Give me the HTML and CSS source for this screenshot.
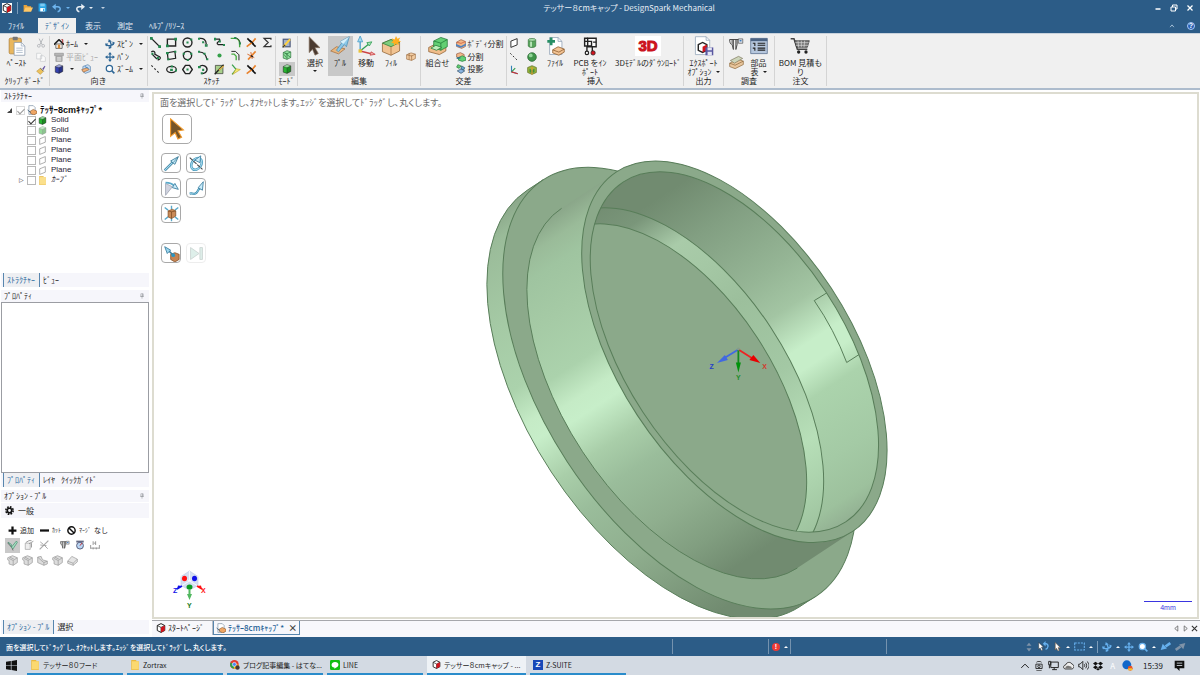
FILE: index.html
```html
<!DOCTYPE html>
<html lang="ja">
<head>
<meta charset="utf-8">
<title>テッサー８cmキャップ - DesignSpark Mechanical</title>
<link rel="stylesheet" href="styles.css">
</head>
<body>
<svg class="defs" aria-hidden="true">
  <defs>
    <symbol id="cube" viewBox="0 0 16 16"><path d="M2 4 8 1l6 2v9l-6 3-6-2z" fill="currentColor" stroke="#222" stroke-width=".8"/><path d="M2 4l6 2 6-3-6-2z" fill="#fff" opacity=".5"/><path d="M8 6v9l6-3V3z" fill="#000" opacity=".22"/><path d="M2 4l6 2 6-3M8 6v9" fill="none" stroke="#222" stroke-width=".6"/></symbol>
    <symbol id="app" viewBox="0 0 16 16"><path d="M2 4 8 1l6 3v8l-6 3-6-3z" fill="#fff" stroke="#222" stroke-width="1.600"/><path d="M2 4l6 3 6-3M8 7v8" fill="none" stroke="#222" stroke-width="1.200"/><path d="M8 7l6-3v8l-6 3z" fill="#d3131d"/></symbol>
    <symbol id="folder" viewBox="0 0 16 16"><path d="M1 14V3h5l1.500 2H13v2.500" fill="#e8a33c"/><path d="M1 14l3-7h12l-3 7z" fill="#ffc766"/></symbol>
    <symbol id="yfolder" viewBox="0 0 16 16"><path d="M2 0h8v2h4v14H2z" fill="#e9b93f"/><path d="M3 2h11v13H3z" fill="#fbd970"/></symbol>
    <symbol id="save" viewBox="0 0 16 16"><path d="M1 1h12l2 2v12H1z" fill="#27a4e6"/><path d="M4 1h8v5H4z" fill="#7cc9f2"/><path d="M4 9h8v6H4z" fill="#fff"/><path d="M9 10h2v4H9z" fill="#27a4e6"/></symbol>
    <symbol id="undo" viewBox="0 0 16 16"><path d="M3 6h6c6 0 5 7 0 8" fill="none" stroke="currentColor" stroke-width="2.400"/><path d="M6 1v10L0 6z" fill="currentColor"/></symbol>
    <symbol id="pin" viewBox="0 0 16 16"><path d="M5 2h6v7H5zM3 9h10M8 9v6M9.500 2v7" fill="none" stroke="#8a8d94" stroke-width="1.400"/></symbol>
    <symbol id="clip" viewBox="0 0 24 28"><rect x="1" y="3" width="17" height="22" rx="2" fill="#e9b75e" stroke="#a97931"/><rect x="6" y="1" width="7" height="5" rx="1" fill="#777"/><path d="M8 9h10l5 5v13H8z" fill="#fff" stroke="#8494a8"/><path d="M18 9v5h5M11 17h9M11 20h9M11 23h9" fill="none" stroke="#9aabc0"/></symbol>
    <symbol id="cut" viewBox="0 0 16 16"><path d="M5 1l5 10M11 1 6 11" stroke="#b5b8bc" stroke-width="1.600"/><circle cx="4.500" cy="12.500" r="2.200" fill="none" stroke="#b5b8bc" stroke-width="1.500"/><circle cx="11.500" cy="12.500" r="2.200" fill="none" stroke="#b5b8bc" stroke-width="1.500"/></symbol>
    <symbol id="copy" viewBox="0 0 16 16"><path d="M1 2h6l2 2v7H1zM7 6h5l3 3v6H7z" fill="#fafafa" stroke="#c4c7ca"/></symbol>
    <symbol id="brush" viewBox="0 0 16 16"><path d="M10 6l4-5 1 1-3 6z" fill="#604fa0"/><path d="M1 10l6-5 5 5-5 5z" fill="#edc35c" stroke="#a9802c" stroke-width=".7"/><path d="M7 5l5 5" stroke="#666" stroke-width="1.500"/></symbol>
    <symbol id="home" viewBox="0 0 16 16"><path d="M3 8h10v7H3z" fill="#fff" stroke="#222"/><path d="M0 9l8-8 8 8" fill="none" stroke="#222" stroke-width="2.400"/><path d="M6 9h4v6H6z" fill="#d98a34"/><path d="M12 1h2v5" stroke="#a22" fill="none" stroke-width="1.500"/></symbol>
    <symbol id="plan" viewBox="0 0 16 16"><path d="M1 2h14v4H1zM3 7h10v8H3z" fill="#b5b5b5" stroke="#8e8e8e"/><path d="M5 9h6M5 11h6M5 13h6" stroke="#eee"/></symbol>
    <symbol id="viewset" viewBox="0 0 16 16"><path d="M3 4l8-3 4 3v8l-8 3-4-3z" fill="#c8dcf0" stroke="#4a78a8"/><path d="M1 9l9-3 3 3-9 4z" fill="#f1b17b" stroke="#7a4a20" stroke-width=".8"/><path d="M6 4l6 3" stroke="#3a80c0" stroke-width="1.500"/></symbol>
    <symbol id="move4" viewBox="0 0 16 16"><path d="M8 2v12M2 8h12" stroke="currentColor" stroke-width="2"/><path d="M8 0l3 4H5zM8 16l3-4H5zM0 8l4-3v6zM16 8l-4-3v6z" fill="currentColor"/></symbol>
    <symbol id="spin" viewBox="0 0 16 16"><path d="M1 9c3 2 8 2 13-1M8 14c3-3 2-8-1-11" fill="none" stroke="currentColor" stroke-width="2.200"/><path d="M5 5l1-5 5 4zM16 6l-4-2v7zM0 7l5 0-3 5zM6 11l0 5 5-2z" fill="currentColor"/></symbol>
    <symbol id="mag" viewBox="0 0 16 16"><circle cx="7" cy="7" r="5" fill="#fff" stroke="currentColor" stroke-width="2"/><path d="M11 11l4 4" stroke="currentColor" stroke-width="2.500"/></symbol>
    <symbol id="s1" viewBox="0 0 16 16"><path d="M2 2l12 12" stroke="#222" stroke-width="2"/><path d="M0 0h4v4H0zM12 12h4v4h-4z" fill="#258b50"/></symbol>
    <symbol id="s2" viewBox="0 0 16 16"><path d="M2 3h12v10H2z" fill="none" stroke="#222" stroke-width="2"/><path d="M0 11h4v4H0zM12 1h4v4h-4z" fill="#258b50"/></symbol>
    <symbol id="s3" viewBox="0 0 16 16"><circle cx="8" cy="8" r="6.500" fill="none" stroke="#222" stroke-width="2"/><path d="M6.500 6.500h3v3h-3zM12 2h3v3h-3z" fill="#258b50"/></symbol>
    <symbol id="s4" viewBox="0 0 16 16"><path d="M2 2c6-1 10 3 10 8" fill="none" stroke="#222" stroke-width="1.800"/><path d="M0 1h3v3H0zM10 10h4v4h-4zM6 6h3v3H6z" fill="#258b50"/><path d="M9 8l5 5" stroke="#888"/></symbol>
    <symbol id="s5" viewBox="0 0 16 16"><path d="M2 3h6c3 4-7 4-2 8h8" fill="none" stroke="#222" stroke-width="1.800"/><path d="M0 1h3v4H0zM13 10h3v3h-3zM7 5h3v3H7z" fill="#258b50"/></symbol>
    <symbol id="s6" viewBox="0 0 16 16"><path d="M1 2h6c5 0 7 4 7 8v5" fill="none" stroke="#49a83e" stroke-width="2"/><path d="M7 1c4 0 7 3 8 8" fill="none" stroke="#222"/><path d="M6 0h3v3H6zM13 8h3v3h-3z" fill="#258b50"/></symbol>
    <symbol id="s7" viewBox="0 0 16 16"><path d="M2 2l12 12" stroke="#111" stroke-width="2.200"/><path d="M14 2L9 8 1 14" fill="none" stroke="#e9822c" stroke-width="2.400"/><path d="M6 5l5 5" stroke="#111" stroke-width="2"/></symbol>
    <symbol id="s8" viewBox="0 0 16 16"><path d="M13 4V2H3l6 6-6 6h10v-2" fill="none" stroke="#333" stroke-width="1.800"/></symbol>
    <symbol id="s9" viewBox="0 0 16 16"><path d="M2 3c3-3 6 0 5 3l5 3c5 1 3 6-1 5M3 6l7 7" fill="none" stroke="#222" stroke-width="1.800"/><path d="M2 4h3v3H2zM10 10h3v3h-3z" fill="#258b50"/></symbol>
    <symbol id="s10" viewBox="0 0 16 16"><path d="M2 4l11-2 1 10-11 2z" fill="none" stroke="#222" stroke-width="1.800"/><path d="M0 3h4v3H0zM12 1h3v3h-3zM2 12h3v3H2z" fill="#258b50"/></symbol>
    <symbol id="s11" viewBox="0 0 16 16"><circle cx="8" cy="8" r="6" fill="none" stroke="#222" stroke-width="2"/><path d="M1 4h3v3H1zM12 4h3v3h-3zM7 13h3v3H7z" fill="#258b50"/></symbol>
    <symbol id="s12" viewBox="0 0 16 16"><path d="M2 3c6 0 10 5 11 11" fill="none" stroke="#222" stroke-width="1.600"/><path d="M0 1h3v3H0zM12 12h3v3h-3zM8 4h3v3H8z" fill="#258b50"/></symbol>
    <symbol id="s13" viewBox="0 0 16 16"><circle cx="8" cy="8" r="3" fill="#35a04a"/></symbol>
    <symbol id="s14" viewBox="0 0 16 16"><path d="M2 2h6l5 5v8" fill="none" stroke="#222" stroke-width="1.400"/><path d="M2 6h4l3 3v6" fill="none" stroke="#4bad43" stroke-width="2"/></symbol>
    <symbol id="s15" viewBox="0 0 16 16"><path d="M3 14L14 2" stroke="#e9822c" stroke-width="2.400"/><path d="M2 6l10 5M7 3l2 10" stroke="#d66b2f" stroke-width="1.400"/><path d="M7 8l3 2" stroke="#222" stroke-width="2"/></symbol>
    <symbol id="s16" viewBox="0 0 16 16"><path d="M2 2l12 12" stroke="#333" stroke-width="1.600" stroke-dasharray="3 3"/></symbol>
    <symbol id="s17" viewBox="0 0 16 16"><ellipse cx="8" cy="8" rx="7" ry="4.500" fill="none" stroke="#222" stroke-width="1.800"/><path d="M7 2h3v3H7zM6 7h4v3H6zM13 8h3v3h-3z" fill="#258b50"/></symbol>
    <symbol id="s18" viewBox="0 0 16 16"><path d="M5 2h6l4 6-4 6H5L1 8z" fill="none" stroke="#222" stroke-width="2"/><path d="M6.500 6.500h3v3h-3z" fill="#258b50"/></symbol>
    <symbol id="s19" viewBox="0 0 16 16"><path d="M2 4c4-4 12-1 11 5-1 4-4 5-8 5" fill="none" stroke="#222" stroke-width="2"/><path d="M0 3h4v3H0zM6 7h3v3H6zM4 12h3v3H4z" fill="#258b50"/></symbol>
    <symbol id="s20" viewBox="0 0 16 16"><path d="M2 2h11v12H2z" fill="#a9d08b" stroke="#333"/><path d="M1 15L14 1" stroke="#222" stroke-width="2"/><path d="M7 9l7-6" stroke="#dfb146" stroke-width="2"/></symbol>
    <symbol id="s21" viewBox="0 0 16 16"><path d="M3 1l6 7-6 7" fill="none" stroke="#3aa14a" stroke-width="1.800"/><path d="M4 15L15 8 9 7z" fill="#f6ed74" stroke="#c0a72e"/></symbol>
    <symbol id="sketchmode" viewBox="0 0 16 16"><path d="M1 1h13v14H1z" fill="#556080"/><path d="M3 3h9v10H3z" fill="#a2b1cb"/><path d="M2 14L13 2" stroke="#ffd13f" stroke-width="3"/><path d="M1 15l4-4" stroke="#333" stroke-width="2"/></symbol>
    <symbol id="sectionmode" viewBox="0 0 16 16"><path d="M2 4 8 1l6 2v9l-6 3-6-2z" fill="#8fe09c" stroke="#256b35"/><path d="M2 4l6 2 6-3M8 6v9M3 7l4 5M5 5l9 7" fill="none" stroke="#256b35"/></symbol>
    <symbol id="cursor" viewBox="0 0 20 24"><path d="M3 1l13 13-6 0 4 7-4 2-3-7-4 4z" fill="#4a3a30" stroke="#8a7564" stroke-width=".8"/></symbol>
    <symbol id="pull" viewBox="0 0 28 28"><path d="M1 21l8-6 12 3-9 7z" fill="#e8b67f" stroke="#a56c38"/><path d="M9 20L17 9l-3-1L27 1l-4 14-3-3-8 10z" fill="#8cc8e8" stroke="#3d85af" stroke-width=".9"/><path d="M14 8L27 1l-8 10z" fill="#d8f0fa"/></symbol>
    <symbol id="axes" viewBox="0 0 24 24"><path d="M5 18V5" stroke="#4b9fca" stroke-width="1.600"/><path d="M5 0L2 7h6z" fill="#a5dbf1" stroke="#4b9fca"/><path d="M5 18L15 10" stroke="#32a055" stroke-width="1.600"/><path d="M19 7l-6 1 3 4z" fill="#a5e5b7" stroke="#32a055"/><path d="M5 18l12 3" stroke="#c44" stroke-width="1.600"/><path d="M23 22l-6 1 1-4z" fill="#efb0b0" stroke="#c44"/><path d="M3 16h4v4H3z" fill="#e9c33a"/></symbol>
    <symbol id="fill" viewBox="0 0 28 28"><path d="M2 10l12-5 12 4v12l-12 6-12-5z" fill="#f1c392" stroke="#8a5a2c"/><path d="M2 10l12-5 12 4-12 6z" fill="#80cc7d" stroke="#267936"/><path d="M14 15v12" stroke="#a0703c"/><path d="M21 0l2 4 4-2-2 4 3 2-4 1 1 4-4-2-3 3 0-4-4-1 3-2-2-4 4 2z" fill="#ffae20"/></symbol>
    <symbol id="blend" viewBox="0 0 16 16"><path d="M1 6l7-3 7 2v7l-6 3-8-2z" fill="#f3cda3" stroke="#99673b"/><path d="M5 3v11M9 7v8M1 6l8 2 6-3" fill="none" stroke="#99673b"/></symbol>
    <symbol id="combine" viewBox="0 0 28 26"><path d="M1 15l8-4 16 3v6l-9 5L1 21z" fill="#f0bd8b" stroke="#8a5a2c"/><path d="M8 6l10-5 9 3v10l-9 5-10-4z" fill="#63cf73" stroke="#1c7433"/><path d="M8 6l10 3 9-5M18 9v10" fill="none" stroke="#1c7433"/><path d="M4 16l7-4 8 3-7 4z" fill="#bdefb9" stroke="#1c7433"/></symbol>
    <symbol id="split1" viewBox="0 0 16 16"><path d="M1 5l7-4 7 3v8l-6 3-8-3z" fill="#f3b889" stroke="#8d4b31"/><path d="M0 8l8 3 8-4v3l-8 4-8-3z" fill="#4b83c4"/><path d="M1 5l7 2 7-3" fill="none" stroke="#c9482e"/></symbol>
    <symbol id="split2" viewBox="0 0 16 16"><path d="M1 3l6-2 6 3v5l-6 2-6-3z" fill="#f3b889" stroke="#8d4b31"/><path d="M4 9l6-3 6 3v4l-6 2-6-2z" fill="#63cf73" stroke="#1c7433"/><path d="M1 10l6-1" stroke="#35758e" stroke-width="2.500"/></symbol>
    <symbol id="split3" viewBox="0 0 16 16"><path d="M3 1l5 2-3 4-4-2z" fill="#63cf73" stroke="#1c7433"/><path d="M9 3l5 3-2 4-4-2z" fill="#63a9cf" stroke="#22435a"/><path d="M2 11l6-3 6 3-6 4z" fill="#8bb4e0" stroke="#22435a"/></symbol>
    <symbol id="plane" viewBox="0 0 16 16"><path d="M3 5l10-4v10L3 15z" fill="#fff" stroke="currentColor" stroke-width="1.400"/></symbol>
    <symbol id="cyl" viewBox="0 0 16 16"><path d="M2 3v10c2 3 10 3 12 0V3" fill="#58a55c" stroke="#2e6e34"/><path d="M5 4v10h3V4z" fill="#b8e5b9"/><ellipse cx="8" cy="3" rx="6" ry="2.300" fill="#a8dba9" stroke="#2e6e34"/></symbol>
    <symbol id="ball" viewBox="0 0 16 16"><circle cx="8" cy="8" r="7" fill="#3f9449" stroke="#245f2d"/><circle cx="6" cy="5.500" r="3" fill="#91d497"/></symbol>
    <symbol id="shell" viewBox="0 0 16 16"><path d="M1 4 8 1l7 3v8l-7 3-7-3z" fill="#9bb43a" stroke="#54661b"/><path d="M4 6l4 2 4-2v5l-4 2-4-2z" fill="#3f8f3d"/><path d="M8 3v12" stroke="#dd9c33" stroke-width="2"/></symbol>
    <symbol id="triad" viewBox="0 0 16 16"><path d="M4 1v10l10 3" fill="none" stroke="#3182b5" stroke-width="1.800"/><path d="M4 11l6-6" stroke="#2b9b4a" stroke-width="1.800"/><path d="M4 11l10 3" stroke="#c33" stroke-width="2"/></symbol>
    <symbol id="filein" viewBox="0 0 24 26"><path d="M5 2h11l5 5v17H5z" fill="#fff" stroke="#8da0b5"/><path d="M16 2v5h5" fill="none" stroke="#8da0b5"/><path d="M7 2v10M2 7h10" stroke="#288e65" stroke-width="3.500"/><path d="M9 18l7-4 8 3v4l-7 4-8-3z" fill="#f3c495" stroke="#8a5a2c"/><path d="M9 18l8 3 7-4" fill="none" stroke="#8a5a2c"/></symbol>
    <symbol id="pcb" viewBox="0 0 24 26"><path d="M9 3h11v11H9z" fill="#fff" stroke="#222" stroke-width="1.800"/><path d="M5 7h9v6H5zM5 7V3h4M20 8h-4M8 14v6M15 14v6" fill="none" stroke="#222" stroke-width="1.800"/><circle cx="8" cy="22" r="2.200" fill="#fff" stroke="#222" stroke-width="1.600"/><circle cx="16" cy="22" r="2.800" fill="#d3131d" stroke="#222"/></symbol>
    <symbol id="export" viewBox="0 0 28 28"><path d="M2 1h15l5 5v20H2z" fill="#fff" stroke="#8da0b5"/><path d="M17 1v5h5" fill="none" stroke="#8da0b5"/><path d="M6 12l6-3 6 3v8l-6 3-6-3z" fill="#fff" stroke="#222" stroke-width="2"/><path d="M12 15l6-3v8l-6 3z" fill="#d3131d"/><path d="M16 16h11v11H16z" fill="#5957a0"/><path d="M19 16h6v4h-6zM19 22h6v5h-6z" fill="#e4e5f3"/></symbol>
    <symbol id="caliper" viewBox="0 0 24 22"><path d="M1 3h15M5 3v8l2 8V3M11 3v16l2-8V3" fill="none" stroke="currentColor" stroke-width="1.500"/><path d="M1 3c0 4 1 7 3 8" fill="none" stroke="currentColor" stroke-width="1.500"/><path d="M15 2h7v7h-7z" fill="#e1e4ea" stroke="currentColor"/><path d="M17 5h3" stroke="#246bb5" stroke-width="2"/></symbol>
    <symbol id="bom" viewBox="0 0 26 24"><path d="M1 1h24v22H1z" fill="#b6c7dd" stroke="#4b6383"/><path d="M1 1h24v4H1z" fill="#4b6383"/><path d="M4 8h3v4M4 15h3v4M11 8h11M11 11h11M11 15h11M11 18h11" fill="none" stroke="#222" stroke-width="1.600"/></symbol>
    <symbol id="mass" viewBox="0 0 22 20"><path d="M1 11l12-6 8 3v5L9 19l-8-3z" fill="#e9c69d" stroke="#8a6638"/><path d="M2 7l12-6 6 3-12 7z" fill="#cdd5ba" stroke="#7e765b"/><path d="M1 11l8 3 12-6" fill="none" stroke="#8a6638"/></symbol>
    <symbol id="cart" viewBox="0 0 30 26"><path d="M1 2h5l5 16h15" fill="none" stroke="#444" stroke-width="2.200"/><path d="M7 5h22l-3 10H10z" fill="#777" stroke="#333"/><path d="M8 8h20M9 12h18M12 5l1 10M17 5v10M22 5l-1 10" stroke="#ddd"/><circle cx="13" cy="22" r="2.500" fill="#222"/><circle cx="24" cy="22" r="2.500" fill="#222"/></symbol>
    <symbol id="doc" viewBox="0 0 16 16"><path d="M3 1h7l3 3v11H3z" fill="#fff" stroke="#71869d"/><path d="M5 10l5-3 6 3v3l-5 3-6-3z" fill="#efa665" stroke="#75441d" stroke-width=".8"/><path d="M1 8l5 4" stroke="#486580" stroke-width="1.500"/></symbol>
    <symbol id="arrow" viewBox="0 0 20 20"><path d="M2 18L12 8" stroke="#357996" stroke-width="3"/><path d="M2 18L12 8" stroke="#a4dbf2" stroke-width="1.400"/><path d="M9 7L18 2l-4 9z" fill="#c9ecfa" stroke="#357996"/><path d="M12 9l6-7" stroke="#357996" stroke-width=".8"/></symbol>
    <symbol id="revolve" viewBox="0 0 20 20"><ellipse cx="10" cy="10.500" rx="5.500" ry="7.500" transform="rotate(35 10 10.500)" fill="none" stroke="#4b9dbf" stroke-width="3"/><ellipse cx="10" cy="10.500" rx="5.500" ry="7.500" transform="rotate(35 10 10.500)" fill="none" stroke="#a9dbee" stroke-width="1.200"/><path d="M2 3l15 14" stroke="#444" stroke-width="1.200" stroke-dasharray="5 1"/><path d="M8 6L15 1l-1 8z" fill="#c9ecfa" stroke="#397c9e"/></symbol>
    <symbol id="pivot" viewBox="0 0 20 20"><path d="M3 4v14L11 8z" fill="#d0d3df" stroke="#a2a7b5"/><path d="M3 3c5 0 8 1 10 4" fill="none" stroke="#5aa9ca" stroke-width="2"/><path d="M11 9l3-5 4 7z" fill="#c9ecfa" stroke="#397c9e"/></symbol>
    <symbol id="sweep" viewBox="0 0 20 20"><path d="M2 16c5-1 5 2 8-1s1-4 5-6" fill="none" stroke="#3e8bad" stroke-width="2.600"/><path d="M2 16c5-1 5 2 8-1s1-4 5-6" fill="none" stroke="#98d3eb"/><path d="M12 9L18 2l-1 10z" fill="#c9ecfa" stroke="#397c9e"/></symbol>
    <symbol id="scale" viewBox="0 0 20 20"><path d="M2 3l4 3M18 3l-4 3M2 17l4-3M18 17l-4-3M10 1v4M10 19v-4" stroke="#59a9ca" stroke-width="1.600"/><path d="M6 7l5-2 4 2v6l-5 3-4-2z" fill="#c98a57" stroke="#79451c" stroke-width=".8"/><path d="M6 7l4 1 5-1M10 8v8" fill="none" stroke="#79451c" stroke-width=".8"/></symbol>
    <symbol id="upto" viewBox="0 0 20 20"><path d="M9 11l5-2 5 2v6l-5 3-5-3z" fill="#c58454" stroke="#79451c" stroke-width=".8"/><path d="M6 6l6 6" fill="none" stroke="#397c9e" stroke-width="1.800"/><path d="M2 2l7 4-4 4z" fill="#9bd7ef" stroke="#397c9e"/><circle cx="12" cy="12" r="2.200" fill="#2b95c2"/></symbol>
    <symbol id="next" viewBox="0 0 20 20"><path d="M3 3v14l10-7z" fill="#bfe0d6" stroke="#98aaa5"/><path d="M14 3h3v14h-3z" fill="#bfe0d6" stroke="#98aaa5"/></symbol>
    <symbol id="gear" viewBox="0 0 16 16"><circle cx="8" cy="8" r="6.500" fill="none" stroke="#111" stroke-width="2.800" stroke-dasharray="3 2.100"/><circle cx="8" cy="8" r="4" fill="none" stroke="#111" stroke-width="3"/></symbol>
    <symbol id="gcube" viewBox="0 0 16 16"><path d="M1 4l7-3 7 3v7l-6 4-6-2V8L1 7z" fill="#ddd" stroke="#989898"/><path d="M3 5l6 3 6-4M9 8v7M4 3l6 3" fill="none" stroke="#989898"/></symbol>
    <symbol id="wedge" viewBox="0 0 16 16"><path d="M1 3l5-1 2 5 7 2v4l-5 2-9-4z" fill="#ddd" stroke="#989898"/><path d="M1 3l4 4 5 4v4M10 11l5-2" fill="none" stroke="#989898"/></symbol>
    <symbol id="slab" viewBox="0 0 16 16"><path d="M1 9l6-7 8 4v4l-6 5-8-3z" fill="#e5e5e5" stroke="#989898"/><path d="M1 9l8 3 6-6M9 12v3" fill="none" stroke="#989898"/></symbol>
    <symbol id="gext" viewBox="0 0 16 16"><path d="M2 5h8v10H2z" fill="#eee" stroke="#999"/><path d="M3 4l5-3h4M8 6l7-4M12 5v7" fill="none" stroke="#999" stroke-width="1.500"/></symbol>
    <symbol id="gx" viewBox="0 0 16 16"><path d="M1 15L15 1" stroke="#aaa" stroke-width="2"/><path d="M2 3l5 4M9 9l5 5M2 8l10 1" stroke="#999" stroke-width="1.300"/></symbol>
    <symbol id="ruler" viewBox="0 0 16 16"><path d="M1 13h14M1 8v6M15 8v6M5 2v6M9 2v6M6 5h3M5 12v3M10 12v3" fill="none" stroke="#888" stroke-width="1.300"/></symbol>
    <symbol id="dial" viewBox="0 0 16 16"><path d="M2 1h12v3H2z" fill="#656b86"/><circle cx="8" cy="9" r="5.500" fill="#b9d6f4" stroke="#555b7b" stroke-width="1.500"/><path d="M8 9l3-4" stroke="#c22" stroke-width="1.500"/></symbol>
  </defs>
</svg>

<header class="titlebar">
  <div class="quick">
    <span class="appbox"><svg class="i10"><use href="#app"/></svg></span><span class="vline"></span>
    <button aria-label="開く"><svg class="i10"><use href="#folder"/></svg></button>
    <button aria-label="保存"><svg class="i9"><use href="#save"/></svg></button>
    <button class="blue" aria-label="元に戻す"><svg class="i10"><use href="#undo"/></svg><i class="dd"></i></button>
    <button class="white" aria-label="やり直し"><svg class="i10 flip"><use href="#undo"/></svg><i class="dd"></i></button>
    <i class="dd wide"></i>
  </div>
  <h1>テッサー８cmキャップ - DesignSpark Mechanical</h1>
  <div class="winbtns">
    <button aria-label="最小化"><svg class="i8" viewBox="0 0 16 16"><path d="M3 10h10" stroke="#fff" stroke-width="3"/></svg></button>
    <button aria-label="元のサイズ"><svg class="i8" viewBox="0 0 16 16"><path d="M2 6h9v8H2zM5 6V2h9v8h-3" fill="none" stroke="#fff" stroke-width="2"/></svg></button>
    <button aria-label="閉じる"><svg class="i8" viewBox="0 0 16 16"><path d="M3 3l10 10M13 3L3 13" stroke="#fff" stroke-width="2.500"/></svg></button>
  </div>
</header>

<nav class="tabs">
  <button>ﾌｧｲﾙ</button><button class="on">ﾃﾞｻﾞｲﾝ</button><button>表示</button><button>測定</button><button>ﾍﾙﾌﾟ/ﾘｿｰｽ</button>
  <span class="help"><svg class="i6" viewBox="0 0 16 16"><path d="M3 11l5-6 5 6" fill="none" stroke="#c7dbee" stroke-width="2"/></svg><span class="q">?</span></span>
</nav>

<section class="ribbon">
  <div class="group g-clip">
    <div class="cont">
      <button class="big"><svg class="i20"><use href="#clip"/></svg>ﾍﾟｰｽﾄ</button>
      <div class="col"><svg class="i10"><use href="#cut"/></svg><svg class="i10"><use href="#copy"/></svg><svg class="i10"><use href="#brush"/></svg></div>
    </div><h2>ｸﾘｯﾌﾟﾎﾞｰﾄﾞ</h2>
  </div>
  <div class="group g-orient">
    <div class="cont">
      <div class="col list">
        <button><svg class="i10"><use href="#home"/></svg>ﾎｰﾑ<i class="dd"></i></button>
        <button class="off"><svg class="i10"><use href="#plan"/></svg>平面ﾋﾞｭｰ</button>
        <button class="navy"><svg class="i10"><use href="#cube"/></svg><i class="dd"></i><svg class="i10"><use href="#viewset"/></svg></button>
      </div>
      <div class="col list steel">
        <button><svg class="i10"><use href="#spin"/></svg>ｽﾋﾟﾝ<i class="dd"></i></button>
        <button><svg class="i10"><use href="#move4"/></svg>ﾊﾟﾝ</button>
        <button><svg class="i10"><use href="#mag"/></svg>ｽﾞｰﾑ<i class="dd"></i></button>
      </div>
    </div><h2>向き</h2>
  </div>
  <div class="group g-sketch">
    <div class="cont sketch">
      <svg><use href="#s1"/></svg><svg><use href="#s2"/></svg><svg><use href="#s3"/></svg><svg><use href="#s4"/></svg><svg><use href="#s5"/></svg><svg><use href="#s6"/></svg><svg><use href="#s7"/></svg><svg><use href="#s8"/></svg>
      <svg><use href="#s9"/></svg><svg><use href="#s10"/></svg><svg><use href="#s11"/></svg><svg><use href="#s12"/></svg><svg><use href="#s13"/></svg><svg><use href="#s14"/></svg><svg><use href="#s15"/></svg><span></span>
      <svg><use href="#s16"/></svg><svg><use href="#s17"/></svg><svg><use href="#s18"/></svg><svg><use href="#s19"/></svg><svg><use href="#s20"/></svg><svg><use href="#s21"/></svg><svg><use href="#s7"/></svg><span></span>
    </div><h2>ｽｹｯﾁ</h2>
  </div>
  <div class="group g-mode">
    <div class="cont"><div class="col"><svg class="i10"><use href="#sketchmode"/></svg><svg class="i10"><use href="#sectionmode"/></svg><span class="sel green"><svg class="i10"><use href="#cube"/></svg></span></div></div><h2>ﾓｰﾄﾞ</h2>
  </div>
  <div class="group g-edit">
    <div class="cont">
      <button class="big"><svg class="i20"><use href="#cursor"/></svg>選択<i class="dd"></i></button>
      <button class="big on"><svg class="i20"><use href="#pull"/></svg>ﾌﾟﾙ</button>
      <button class="big"><svg class="i20"><use href="#axes"/></svg>移動</button>
      <button class="big"><svg class="i20"><use href="#fill"/></svg>ﾌｨﾙ</button>
      <button class="mid" aria-label="ブレンド"><svg class="i10"><use href="#blend"/></svg></button>
    </div><h2>編集</h2>
  </div>
  <div class="group g-cross">
    <div class="cont">
      <button class="big"><svg class="i20"><use href="#combine"/></svg>組合せ</button>
      <div class="col list">
        <button><svg class="i10"><use href="#split1"/></svg>ﾎﾞﾃﾞｨ分割</button>
        <button><svg class="i10"><use href="#split2"/></svg>分割</button>
        <button><svg class="i10"><use href="#split3"/></svg>投影</button>
      </div>
    </div><h2>交差</h2>
  </div>
  <div class="group g-insert">
    <div class="cont">
      <div class="col"><svg class="i10"><use href="#plane"/></svg><svg class="i10"><use href="#s16"/></svg><svg class="i10"><use href="#triad"/></svg></div>
      <div class="col"><svg class="i10"><use href="#cyl"/></svg><svg class="i10"><use href="#ball"/></svg><svg class="i10"><use href="#shell"/></svg></div>
      <button class="big"><svg class="i20"><use href="#filein"/></svg>ﾌｧｲﾙ</button>
      <button class="big pcb"><svg class="i20"><use href="#pcb"/></svg><span>PCB をｲﾝ<br>ﾎﾟｰﾄ</span></button>
      <button class="big dl"><span class="three">3D</span>3Dﾓﾃﾞﾙのﾀﾞｳﾝﾛｰﾄﾞ</button>
    </div><h2>挿入</h2>
  </div>
  <div class="group g-out">
    <div class="cont"><button class="big"><svg class="i20"><use href="#export"/></svg><span>ｴｸｽﾎﾟｰﾄ<br>ｵﾌﾟｼｮﾝ<i class="dd"></i></span></button></div><h2>出力</h2>
  </div>
  <div class="group g-check">
    <div class="cont">
      <div class="col two"><svg class="i15"><use href="#caliper"/></svg><svg class="i15"><use href="#mass"/></svg></div>
      <button class="big"><svg class="i18"><use href="#bom"/></svg><span>部品<br>表<i class="dd"></i></span></button>
    </div><h2>調査</h2>
  </div>
  <div class="group g-order">
    <div class="cont"><button class="big"><svg class="i20"><use href="#cart"/></svg><span>BOM 見積も<br>り</span></button></div><h2>注文</h2>
  </div>
</section>

<main class="work">
  <aside class="side">
    <section class="panel tall">
      <h3>ｽﾄﾗｸﾁｬｰ<svg class="i6"><use href="#pin"/></svg></h3>
      <ul class="tree">
        <li class="root"><i class="open"></i><input type="checkbox" id="t0" checked class="dim"><svg class="i10"><use href="#doc"/></svg><label for="t0">ﾃｯｻｰ8cmｷｬｯﾌﾟ*</label></li>
        <li><input type="checkbox" id="t1" checked><svg class="i9 green"><use href="#cube"/></svg><label for="t1">Solid</label></li>
        <li><input type="checkbox" id="t2"><svg class="i9 green pale"><use href="#cube"/></svg><label for="t2">Solid</label></li>
        <li><input type="checkbox" id="t3"><svg class="i9 gray"><use href="#plane"/></svg><label for="t3">Plane</label></li>
        <li><input type="checkbox" id="t4"><svg class="i9 gray"><use href="#plane"/></svg><label for="t4">Plane</label></li>
        <li><input type="checkbox" id="t5"><svg class="i9 gray"><use href="#plane"/></svg><label for="t5">Plane</label></li>
        <li><input type="checkbox" id="t6"><svg class="i9 gray"><use href="#plane"/></svg><label for="t6">Plane</label></li>
        <li class="curve"><i class="shut"></i><input type="checkbox" id="t7"><svg class="i9 soft"><use href="#yfolder"/></svg><label for="t7">ｶｰﾌﾞ</label></li>
      </ul>
      <div class="ptabs"><button class="on">ｽﾄﾗｸﾁｬｰ</button><button>ﾋﾞｭｰ</button></div>
    </section>
    <section class="panel tall">
      <h3>ﾌﾟﾛﾊﾟﾃｨ<svg class="i6"><use href="#pin"/></svg></h3>
      <div class="props"></div>
      <div class="ptabs"><button class="on">ﾌﾟﾛﾊﾟﾃｨ</button><button>ﾚｲﾔ</button><button>ｸｲｯｸｶﾞｲﾄﾞ</button></div>
    </section>
    <section class="panel short">
      <h3>ｵﾌﾟｼｮﾝ - ﾌﾟﾙ<svg class="i6"><use href="#pin"/></svg></h3>
      <h4><svg class="i9"><use href="#gear"/></svg>一般</h4>
      <div class="opts">
        <div class="orow words">
          <button><svg class="i9" viewBox="0 0 16 16"><path d="M8 1v14M1 8h14" stroke="#111" stroke-width="4"/></svg>追加</button>
          <button><svg class="i9" viewBox="0 0 16 16"><path d="M0 8h16" stroke="#111" stroke-width="4"/></svg><small>ｶｯﾄ</small></button>
          <button><svg class="i9" viewBox="0 0 16 16"><circle cx="8" cy="8" r="6.500" fill="none" stroke="#111" stroke-width="2.600"/><path d="M3 3l10 10" stroke="#111" stroke-width="2.600"/></svg><small>ﾏｰｼﾞ</small> なし</button>
        </div>
        <div class="orow"><span class="osel"><svg class="i11" viewBox="0 0 20 20"><path d="M1 5l8 9 2 5" fill="none" stroke="#222"/><path d="M8 13L17 2l2 2-8 12z" fill="#a7dcc0" stroke="#287e5b"/><path d="M2 4l6 4v4z" fill="#c3e7d4" stroke="#287e5b"/></svg></span><svg class="i10"><use href="#gext"/></svg><svg class="i10"><use href="#gx"/></svg><svg class="i10 gap"><use href="#caliper"/></svg><svg class="i10"><use href="#dial"/></svg><svg class="i10"><use href="#ruler"/></svg></div>
        <div class="orow"><svg class="i11"><use href="#gcube"/></svg><svg class="i11"><use href="#gcube"/></svg><svg class="i11"><use href="#wedge"/></svg><svg class="i11"><use href="#gcube"/></svg><svg class="i11"><use href="#slab"/></svg></div>
      </div>
      <div class="ptabs"><button class="on">ｵﾌﾟｼｮﾝ - ﾌﾟﾙ</button><button>選択</button></div>
    </section>
  </aside>

  <div class="stage">
    <div class="viewport">
      <svg class="model" viewBox="154 94 1044 524" role="img" aria-label="キャップの3Dモデル">
        <defs>
          <linearGradient id="outer" gradientUnits="userSpaceOnUse" x1="617" y1="172" x2="853" y2="532.500">
            <stop offset="0" stop-color="#8aa689"/><stop offset=".05" stop-color="#9abb99"/><stop offset=".1" stop-color="#9fc4a0"/><stop offset=".2" stop-color="#a5caa5"/><stop offset=".32" stop-color="#abd2ac"/><stop offset=".39" stop-color="#c5ebc6"/><stop offset=".43" stop-color="#c7eec9"/><stop offset=".52" stop-color="#a9cea9"/><stop offset=".6" stop-color="#9abd9b"/><stop offset=".73" stop-color="#8fae8e"/><stop offset=".83" stop-color="#819e80"/><stop offset=".92" stop-color="#718b70"/><stop offset="1" stop-color="#718b70"/>
          </linearGradient>
          <linearGradient id="flange" gradientUnits="userSpaceOnUse" x1="543" y1="180" x2="817" y2="597">
            <stop offset="0" stop-color="#8aa689"/><stop offset=".05" stop-color="#9abb99"/><stop offset=".2" stop-color="#a5caa5"/><stop offset=".32" stop-color="#abd2ac"/><stop offset=".39" stop-color="#c5ebc6"/><stop offset=".43" stop-color="#c7eec9"/><stop offset=".52" stop-color="#a9cea9"/><stop offset=".6" stop-color="#9abd9b"/><stop offset=".73" stop-color="#8fae8e"/><stop offset=".92" stop-color="#718b70"/><stop offset="1" stop-color="#718b70"/>
          </linearGradient>
          <linearGradient id="inner" gradientUnits="userSpaceOnUse" x1="531.500" y1="352.500" x2="938.500" y2="352.500">
            <stop offset="0" stop-color="#718b70"/><stop offset=".08" stop-color="#718b70"/><stop offset=".21" stop-color="#829f82"/><stop offset=".38" stop-color="#95b595"/><stop offset=".48" stop-color="#a3c5a3"/><stop offset=".58" stop-color="#c7eec9"/><stop offset=".63" stop-color="#c7eec9"/><stop offset=".7" stop-color="#abd3ac"/><stop offset=".85" stop-color="#a4caa5"/><stop offset=".95" stop-color="#9dc19d"/><stop offset="1" stop-color="#93b193"/>
          </linearGradient>
          <linearGradient id="ledge" gradientUnits="userSpaceOnUse" x1="476.500" y1="388.500" x2="883.500" y2="388.500">
            <stop offset="0" stop-color="#718b70"/><stop offset=".1" stop-color="#7a967a"/><stop offset=".2" stop-color="#a9cba9"/><stop offset=".28" stop-color="#a5c8a5"/><stop offset=".4" stop-color="#9cbf9c"/><stop offset=".6" stop-color="#a3c8a4"/><stop offset=".78" stop-color="#b7dfb8"/><stop offset=".88" stop-color="#abd2ac"/><stop offset="1" stop-color="#9bbf9b"/>
          </linearGradient>
          <clipPath id="bore"><ellipse cx="735" cy="352.500" rx="203.500" ry="109.700" transform="rotate(56.760 735 352.500)"/></clipPath>
        </defs>
        <g stroke="#587d59" stroke-width="1">
          <path d="M543.300 180L527.300 190.500A249 134.300 56.760 0 0 800.700 607.500L816.700 597z" fill="url(#flange)"/>
          <ellipse cx="680" cy="388.700" rx="249.400" ry="134.500" transform="rotate(56.760 680 388.700)" fill="#8ba98a"/>
          <path d="M616.900 172.100L561.900 208.500A215 115.900 56.760 0 0 798.100 568.900L853.100 532.500z" fill="url(#outer)" stroke="none"/>
          <path d="M561.900 208.500A215 115.900 56.760 0 0 798.100 568.900" fill="none"/>
          <ellipse cx="735" cy="352.300" rx="215.500" ry="116.200" transform="rotate(56.760 735 352.300)" fill="#8ba98a"/>
          <ellipse cx="735" cy="352.500" rx="203.500" ry="109.700" transform="rotate(56.760 735 352.500)" fill="url(#inner)" stroke="none"/>
          <g clip-path="url(#bore)">
            <ellipse cx="680" cy="388.500" rx="203.500" ry="109.700" transform="rotate(56.760 680 388.500)" fill="url(#ledge)"/>
            <ellipse cx="671" cy="394.500" rx="192.200" ry="103.600" transform="rotate(56.760 671 394.500)" fill="#8ba98a"/>
            <path d="M828 293L815 301Q835 330 847.500 363L860 355" fill="none"/>
          </g>
          <ellipse cx="735" cy="352.500" rx="203.500" ry="109.700" transform="rotate(56.760 735 352.500)" fill="none"/>
        </g>
        <g class="axis">
          <path d="M739 350L725 358.500" stroke="#4169e1" stroke-width="1.800"/><path d="M717.500 363.500l8-8 3 5z" fill="#4169e1"/>
          <path d="M739 350L754 359.500" stroke="#e22" stroke-width="1.800"/><path d="M761 363.500l-11-3 4-5z" fill="#e80000"/>
          <path d="M739 350V364" stroke="#138a1d" stroke-width="1.800"/><path d="M736.500 363h5L739 373z" fill="#00920c"/>
          <circle cx="739" cy="349.500" r="1.500" fill="#869b8b"/>
          <text x="710" y="370" fill="#2540c8">Z</text><text x="763" y="370" fill="#d33a2c">X</text><text x="736.500" y="381" fill="#238c2c">Y</text>
        </g>
      </svg>
      <p class="prompt">面を選択してﾄﾞﾗｯｸﾞし、ｵﾌｾｯﾄします。ｴｯｼﾞを選択してﾄﾞﾗｯｸﾞし、丸くします。</p>
      <div class="tools">
        <button class="lg" aria-label="選択"><svg class="gold" viewBox="0 0 20 24"><path d="M3 1l14 12-6 1 4 7-4 2-3-7-5 4z" fill="#765528" stroke="#f09a2d" stroke-width="1.200"/></svg></button>
        <div class="tgrid">
          <button aria-label="方向を引く"><svg><use href="#arrow"/></svg></button><button aria-label="回転"><svg><use href="#revolve"/></svg></button>
          <button aria-label="ピボット"><svg><use href="#pivot"/></svg></button><button aria-label="スイープ"><svg><use href="#sweep"/></svg></button>
          <button aria-label="スケール"><svg><use href="#scale"/></svg></button>
        </div>
        <div class="tgrid last">
          <button aria-label="まで"><svg><use href="#upto"/></svg></button><button class="faint" aria-label="完了"><svg><use href="#next"/></svg></button>
        </div>
      </div>
      <svg class="gizmo" viewBox="170 568 40 44">
        <path d="M189.500 572l8.500 5.500v9l-8.500 4.500-8.500-4.500v-9z" fill="#d4dff2" stroke="#b9c8e2" stroke-width=".6"/><path d="M181 577.500l8.500 4.500 8.500-4.500M189.500 572v10M181 587l8.500-5 8.500 5" fill="none" stroke="#fff" stroke-width=".8"/>
        <ellipse cx="184.500" cy="579.500" rx="2.500" ry="2.800" fill="#f11"/><ellipse cx="194.500" cy="579.500" rx="2.500" ry="2.800" fill="#1010e8"/><ellipse cx="189.500" cy="588" rx="3" ry="2.500" fill="#0b9a22"/>
        <path d="M182 587l-5 3.500 1-4z" fill="#1010e8"/><path d="M197 587l5 3.500-1-4z" fill="#f11"/><path d="M188.500 590h2v5h1.500l-2.500 6-2.500-6h1.500z" fill="#52b860"/>
        <path d="M182 587l-5 3" stroke="#1010e8" stroke-width="1.500"/><path d="M197 587l5 3" stroke="#f11" stroke-width="1.500"/>
        <text x="173" y="594" fill="#1010e8">Z</text><text x="201" y="594" fill="#f11">X</text><text x="187" y="609" fill="#187c24">Y</text>
      </svg>
      <div class="scalebar">4mm</div>
    </div>
    <div class="doctabs">
      <button><svg class="i10"><use href="#app"/></svg>ｽﾀｰﾄﾍﾟｰｼﾞ</button>
      <button class="on"><svg class="i10"><use href="#doc"/></svg>ﾃｯｻｰ8cmｷｬｯﾌﾟ*<b>×</b></button>
      <span class="nav"><svg class="i7" viewBox="0 0 16 16"><path d="M11 2v12L4 8z" fill="none" stroke="#444" stroke-width="1.500"/></svg><svg class="i7" viewBox="0 0 16 16"><path d="M5 2v12l7-6z" fill="none" stroke="#444" stroke-width="1.500"/></svg><svg class="i7" viewBox="0 0 16 16"><path d="M2 2l12 12M14 2L2 14" stroke="#333" stroke-width="2.500"/></svg></span>
    </div>
  </div>
</main>

<footer class="status">
  <p>面を選択してﾄﾞﾗｯｸﾞし､ｵﾌｾｯﾄします｡ｴｯｼﾞを選択してﾄﾞﾗｯｸﾞし､丸くします｡</p>
  <div class="cell blank"></div>
  <div class="cell err"><span>!</span><i class="ud"></i></div>
  <div class="cell blank"></div>
  <div class="cell stools">
    <svg class="i10" viewBox="0 0 16 16"><path d="M8 1l4 5H4zM8 15l4-5H4z" fill="#7f93a8"/></svg>
    <svg class="i11" viewBox="0 0 16 16"><path d="M1 2l7 7-3 0 2 4-2 1-2-4-2 2z" fill="#fff" stroke="#222" stroke-width=".6"/><path d="M9 4h3c4 1 3 7-1 8" fill="none" stroke="#66b0ee" stroke-width="2"/><path d="M11 0v8L7 4z" fill="#66b0ee"/></svg>
    <svg class="i9" viewBox="0 0 16 16"><path d="M4 1l9 9-4 0 2 5-2 1-3-5-2 3z" fill="#fff" stroke="#7a5a3a"/></svg><i class="ud"></i>
    <svg class="i11" viewBox="0 0 16 16"><path d="M1 3h14v10H1z" fill="none" stroke="#66b0ee" stroke-width="1.600" stroke-dasharray="3 1.500"/></svg><i class="ud"></i>
    <span class="vline"></span>
    <svg class="i10"><use href="#spin"/></svg><i class="ud"></i>
    <svg class="i10"><use href="#move4"/></svg>
    <svg class="i10"><use href="#mag"/></svg><i class="ud"></i>
    <svg class="i11" viewBox="0 0 16 16"><path d="M15 3L8 8" stroke="#66b0ee" stroke-width="4"/><path d="M1 13l3-9 6 7z" fill="#66b0ee"/></svg>
    <svg class="i11" viewBox="0 0 16 16"><path d="M1 13l7-5" stroke="#7f93a8" stroke-width="4"/><path d="M15 3l-3 9-6-7z" fill="#7f93a8"/></svg>
  </div>
</footer>

<footer class="taskbar">
  <button class="start" aria-label="スタート"><svg class="i11" viewBox="0 0 16 16"><path d="M0 2.500l7-1v6H0zM8 1.300L16 0v7.500H8zM0 8.500h7v6l-7-1zM8 8.500h8V16l-8-1.300z" fill="#111"/></svg></button>
  <button class="task"><svg class="i10"><use href="#yfolder"/></svg>テッサー８０フード</button>
  <button class="task"><svg class="i10"><use href="#yfolder"/></svg>Zortrax</button>
  <button class="task"><svg class="i10" viewBox="0 0 16 16"><circle cx="7" cy="7" r="7" fill="#e33b2e"/><path d="M7 7L1 4a7 7 0 0 0 5 10z" fill="#2ba24c"/><path d="M7 7h7a7 7 0 0 1-8 7z" fill="#fbc116"/><circle cx="7" cy="7" r="3.200" fill="#4a8af4" stroke="#fff"/><circle cx="12" cy="12" r="3.500" fill="#493a35"/></svg>ブログ記事編集 - はてな...</button>
  <button class="task"><svg class="i10" viewBox="0 0 16 16"><rect width="16" height="16" rx="2" fill="#12bd12"/><path d="M8 3c7 0 7 7 2 9l-3 2 0-2C0 11 2 3 8 3z" fill="#fff"/></svg>LINE</button>
  <button class="task on"><svg class="i9"><use href="#app"/></svg>テッサー８cmキャップ - ...</button>
  <button class="task"><span class="z">Z</span>Z-SUITE</button>
  <div class="tray">
    <svg class="i10" viewBox="0 0 16 16"><path d="M2 11l6-6 6 6" fill="none" stroke="#222" stroke-width="1.600"/></svg>
    <svg class="i10" viewBox="0 0 16 16"><path d="M3 5h10v7H3zM4 2c2-2 6-2 8 0M4 15c2 1 6 1 8 0" fill="none" stroke="#222" stroke-width="1.400"/><circle cx="8" cy="8.500" r="2" fill="none" stroke="#222" stroke-width="1.400"/></svg>
    <svg class="i11" viewBox="0 0 16 16"><path d="M4 3h11v8H4zM9 11v3M6 14h7M1 2v5h3V2zM2 7v5" fill="none" stroke="#222" stroke-width="1.400"/></svg>
    <svg class="i11" viewBox="0 0 16 16"><path d="M3 13c-3-1-3-5 1-6 1-4 7-5 9-1 4 1 4 6 0 7z" fill="#eee" stroke="#222" stroke-width="1.300"/><path d="M4 12c-2-3 4-5 6-3 3 0 3 3 2 3z" fill="#777"/></svg>
    <svg class="i11" viewBox="0 0 16 16"><path d="M1 6h2l4-4v12l-4-4H1zM9 6c1 1 1 3 0 4M11 4c2 2 2 6 0 8M13 2c4 3 4 9 0 12" fill="none" stroke="#222" stroke-width="1.300"/></svg>
    <svg class="i10" viewBox="0 0 16 16"><path d="M4 1l4 3-4 3-4-3zM12 1l4 3-4 3-4-3zM4 7l4 3-4 3-4-3zM12 7l4 3-4 3-4-3zM8 11l3 2-3 2-3-2z" fill="#111"/></svg>
    <span class="ime">A</span>
    <svg class="i11" viewBox="0 0 16 16"><circle cx="7" cy="7" r="6.500" fill="#1268c9"/><circle cx="12" cy="12" r="3.500" fill="#e8502b"/><path d="M9 12h6v3H9z" fill="#f4c02c"/></svg>
    <time>15:39</time>
    <svg class="i11" viewBox="0 0 16 16"><path d="M1 1h14v11H8v4l-4-4H1z" fill="#111"/><path d="M4 4.500h8M4 8h8" stroke="#dbe1e8" stroke-width="1.200"/></svg>
  </div>
</footer>
</body>
</html>
```
FILE: styles.css
```css
* { box-sizing: border-box; margin: 0; padding: 0; }
html { height: 100%; }
body {
  display: flex; flex-direction: column; min-height: 100vh;
  font: 8px/10px "Noto Sans CJK JP", sans-serif;
  color: #1c1c1c; background: #f0f0f0; white-space: nowrap;
}
button { font: inherit; color: inherit; background: none; border: 0; display: inline-flex; align-items: center; white-space: nowrap; }
svg { flex: none; display: block; }
h1, h2, h3, h4 { font: inherit; }
ul { list-style: none; }
i { font-style: normal; }
.defs { position: absolute; width: 0; height: 0; }
.i6 { width: 6px; height: 6px; }
.i7 { width: 7px; height: 7px; }
.i8 { width: 8px; height: 8px; }
.i9 { width: 9px; height: 9px; }
.i10 { width: 10px; height: 10px; }
.i11 { width: 11px; height: 11px; }
.i15 { width: 15px; height: 15px; }
.i18 { width: 18px; height: 18px; }
.i20 { width: 20px; height: 20px; }
.flip { transform: scaleX(-1); }
.dd { border: 2px solid transparent; border-top-color: currentColor; border-bottom: 0; display: inline-block; }
.ud { border: 2px solid transparent; border-bottom-color: #fff; border-top: 0; }
.vline { width: 1px; height: 12px; background: #7c9cba; }
.green { color: #25b52e; }
.pale { opacity: .5; }
.soft { opacity: .8; }
.gray { color: #9a9a9a; }

.titlebar { display: grid; grid-template-columns: 1fr auto 1fr; align-items: center; height: 15px; padding: 0 6px 0 2px; background: #2c5c87; color: #e6eef5; }
.quick { display: flex; align-items: center; gap: 5px; color: #c0d0e0; }
.quick button { gap: 4px; }
.appbox { background: #fff; }
.blue { color: #6db4ee; }
.white { color: #e8eef4; }
.wide { margin-left: 3px; }
.titlebar h1 { font-feature-settings: "palt"; margin-left: 62px; }
.winbtns { display: flex; justify-content: flex-end; gap: 8px; }

.tabs { display: flex; align-items: flex-end; height: 18px; background: #2c5c87; color: #e4edf5; }
.tabs button { height: 15px; padding: 0 8px; }
.tabs .on { background: #f0f0f0; color: #2c6a9e; margin: 0 1px 0 6px; padding: 0 7px; }
.help { display: flex; gap: 12px; margin-left: auto; padding: 0 5px 3px 0; align-items: center; }
.q { width: 8px; height: 8px; border-radius: 50%; border: 1px solid #a9c8f5; background: #275fb5; color: #fff; font: bold 7px/6px "Liberation Sans", sans-serif; text-align: center; }

.ribbon { display: flex; height: 57px; padding: 2px 0; background: #f0f0f0; border-top: 1px solid #c8d2dc; border-bottom: 2px solid #adbccd; }
.group { display: flex; flex-direction: column; border-right: 1px solid #d4d4d4; flex: none; }
.group h2 { text-align: center; line-height: 10px; }
.cont { display: flex; flex: 1; min-height: 0; justify-content: center; }
.col { display: flex; flex-direction: column; justify-content: space-between; align-items: center; padding: 2px 0 1px; }
.list { align-items: flex-start; }
.list button { gap: 2px; height: 12px; line-height: 12px; }
.list .dd { margin-left: 4px; }
.big { flex-direction: column; padding: 0 2px; line-height: 9px; gap: 2px; }
.big span .dd { margin: 0 0 2px 4px; }
.big > .dd { margin: 1px 0 0; }
.big.on { background: #c8c8c8; margin-right: 1px; padding: 0 3px; }
.mid { margin-left: 2px; }
.g-clip { width: 50px; }
.g-clip .cont { gap: 6px; }
.g-clip .big { padding: 0 3px; }
.g-orient { width: 98px; }
.g-orient .cont { gap: 7px; }
.steel svg { color: #2f6796; }
.navy { color: #3340b0; }
.navy .dd { color: #222; margin-right: 5px; }
.off { color: #aaa; }
.g-sketch { width: 128px; }
.sketch { display: grid; grid-template-columns: repeat(8, 11px); column-gap: 5px; align-items: center; }
.sketch svg { width: 11px; height: 11px; }
.g-mode { width: 22px; }
.sel { background: #c8c8c8; padding: 2px 3px; }
.g-mode .col { padding-bottom: 0; }
.g-edit { width: 123px; }
.g-edit .big { width: 25px; }
.g-cross { width: 86px; }
.g-cross .cont { gap: 4px; }
.g-insert { width: 177px; }
.g-insert .cont { gap: 8px; }
.g-insert .big { padding: 0; }
.pcb { width: 34px; }
.three { height: 20px; padding: 0 3px; background: #fff; color: #d3131d; font: bold 15px/20px "Liberation Sans", sans-serif; -webkit-text-stroke: 1px #c9121c; }
.g-out { width: 40px; }
.g-check { width: 51px; }
.g-check .cont { gap: 4px; }
.g-check .big { padding-top: 1px; gap: 3px; }
.two { justify-content: flex-start; gap: 3px; padding-top: 1px; }
.two svg { color: #444; }
.g-order { width: 52px; }

.work { display: flex; flex: 1; background: #fff; }
.side { width: 150px; display: flex; flex-direction: column; padding: 0 1px; flex: none; }
.panel { display: flex; flex-direction: column; min-height: 0; }
.tall { flex: 200 1 0; }
.short { flex: 147 1 0; }
.panel h3 { display: flex; justify-content: space-between; align-items: center; height: 12px; padding: 0 4px 0 3px; background: #f6f6fb; }
.panel h4 { display: flex; align-items: center; gap: 4px; height: 15px; padding-left: 4px; background: #f6f6fb; margin-top: 1px; }
.tree { flex: 1; padding: 3px 0 0 26px; font-family: "Liberation Sans", "Noto Sans CJK JP", sans-serif; color: #2a2433; }
.tree li { display: flex; align-items: center; height: 10px; gap: 2px; }
.tree label { padding-left: 2px; }
.tree .root { margin-left: -20px; font-weight: bold; font-size: 9px; color: #111; gap: 1px; }
.root svg { margin-left: 1px; }
.tree .curve { margin-left: -8px; font-style: italic; }
.curve i { width: 6px; }
.open { border: 2px solid transparent; border-right-color: #444; border-bottom-color: #444; width: 5px; height: 5px; margin-right: 3px; }
.shut::before { content: "▷"; font: 6px/8px "DejaVu Sans", sans-serif; display: block; }
input[type="checkbox"] { appearance: none; width: 9px; height: 9px; border: 1px solid #b8b8b8; background: #fff; flex: none; display: grid; place-items: start center; }
input:checked::before { content: ""; width: 3px; height: 6px; border: solid #333; border-width: 0 1px 1px 0; transform: rotate(45deg); }
.dim { opacity: .5; }
.ptabs { display: flex; height: 14px; margin: 0 0 3px; padding-left: 2px; background: #f6f6fb; }
.ptabs button { padding: 0 3px; }
.ptabs .on { color: #2c6a9e; background: #eeeff2; padding: 0 4px 0 3px; border-left: 1px solid #5886ae; border-right: 1px solid #5886ae; }
.props { flex: 1; border: 1px solid #9b9da3; background: #fff; }
.opts { flex: 1; display: flex; flex-direction: column; gap: 3px; padding: 6px 0 0 4px; }
.orow { display: flex; align-items: center; height: 12px; gap: 4px; padding-left: 2px; }
.orow.words { font-size: 7px; gap: 6px; padding-left: 3px; }
.words button { gap: 3px; }
.words small { font-size: 6px; }
.osel { background: #c9c9c9; padding: 2px; margin-left: -2px; }
.gap { margin-left: 6px; color: #333; }
.orow .i10 { margin-right: 1px; }

.stage { flex: 1; min-width: 0; display: flex; flex-direction: column; padding: 2px 0 0 2px; }
.viewport { position: relative; flex: 1; border: 2px solid #dddcd0; margin-right: 1px; overflow: hidden; background: #fff; }
.model { position: absolute; inset: 0; width: 100%; height: 100%; }
.axis text, .gizmo text { font: bold 7px "Liberation Sans", sans-serif; }
.prompt { position: relative; padding: 4px 6px; font-size: 9px; line-height: 10px; color: #6a6a6a; font-feature-settings: "palt"; }
.tools { position: relative; padding: 2px 7px; width: 70px; }
.tools button { justify-content: center; width: 20px; height: 20px; border: 1px solid #a9a9a9; border-radius: 4px; background: #fff; }
.tools svg { width: 17px; height: 17px; }
.tools .lg { width: 30px; height: 30px; border-radius: 5px; margin-left: 1px; }
.tools .gold { width: 22px; height: 22px; }
.tgrid { display: grid; grid-template-columns: 20px 20px; gap: 5px; margin-top: 9px; }
.tgrid.last { margin-top: 20px; }
.tools .faint { opacity: .5; border-color: #ddd; }
.gizmo { position: absolute; left: 16px; bottom: 6px; width: 40px; height: 44px; }
.scalebar { position: absolute; right: 5px; bottom: 4px; width: 48px; border-top: 1px solid #3a35e0; color: #3a35e0; text-align: center; font: 7px/11px "Liberation Sans", sans-serif; }
.doctabs { display: flex; height: 17px; margin: 1px 0 0; padding: 0 2px 2px; border-top: 1px solid #a5a6ab; background: #f7f7fb; }
.doctabs button { gap: 2px; padding: 0 8px 0 2px; border-right: 1px solid #b9bcc4; }
.doctabs .on { color: #1f5f95; border: 1px solid #5886ae; border-top: 0; padding: 0 2px; font-weight: 500; }
.doctabs b { margin-left: 2px; color: #444; font-size: 9px; }
.nav { display: flex; align-items: center; gap: 2px; margin-left: auto; }

.status { display: flex; align-items: center; height: 19px; background: #2c5c87; color: #fff; }
.status p { flex: 0 0 56%; padding-left: 6px; font-size: 7px; font-weight: 500; font-feature-settings: "palt"; }
.cell { display: flex; align-items: center; height: 15px; border-left: 1px solid #7592ae; padding-left: 3px; }
.blank { flex: 0 0 8%; }
.err { flex: 0 0 22px; gap: 4px; }
.err span { width: 8px; height: 8px; border-radius: 50%; background: #ee3a36; font: bold 7px/8px "Liberation Sans", sans-serif; text-align: center; }
.stools { flex: 1; justify-content: flex-end; gap: 4px; padding-right: 14px; color: #66b0ee; }

.taskbar { display: flex; height: 19px; background: #d3dae3; }
.start { width: 27px; padding-left: 6px; }
.task { flex: 0 1 96px; min-width: 0; margin-right: 4px; gap: 3px; padding: 0 3px; font-size: 7px; border-bottom: 2px solid #2a8ccb; font-feature-settings: "palt"; }
.task.on { flex-basis: 99px; background: #eef2f6; padding-left: 5px; }
.z { width: 10px; height: 10px; background: #1848b8; color: #fff; font: bold 8px/10px "Liberation Sans", sans-serif; text-align: center; }
.tray { display: flex; align-items: center; gap: 4px; margin-left: auto; padding-right: 15px; }
.tray time { margin: 0 7px 0 6px; }
.ime { color: #fff; padding: 0 3px; }
```
